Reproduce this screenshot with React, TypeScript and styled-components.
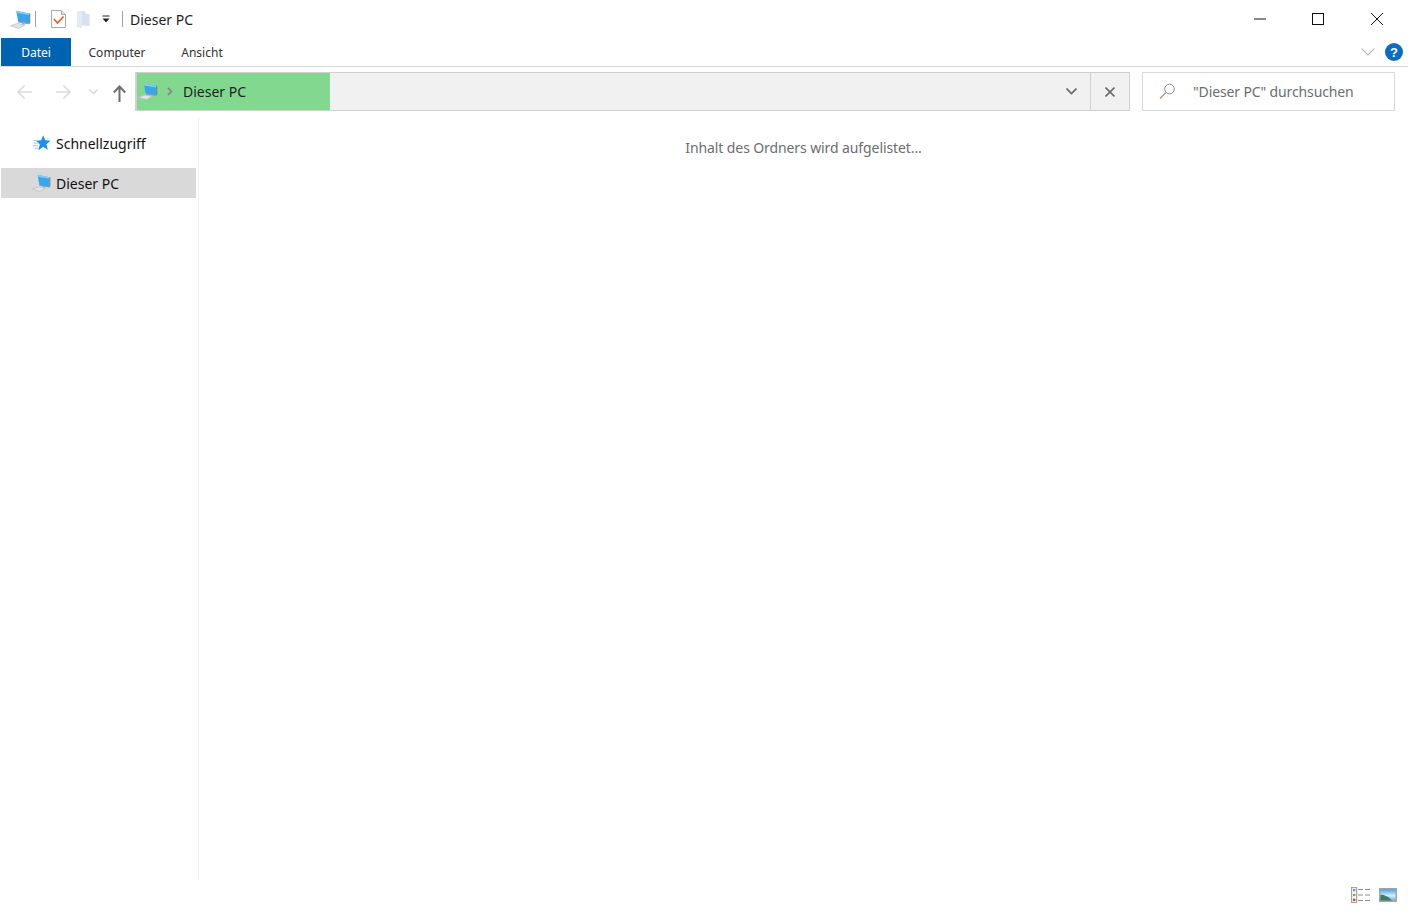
import React from 'react';
import styled, { createGlobalStyle } from 'styled-components';

const Global = createGlobalStyle`
  html, body { margin: 0; padding: 0; background: #fff; height: 100%; overflow: hidden; }
  #root { height: 100%; }
`;
const FONT = `"Noto Sans", "Open Sans", "Liberation Sans", sans-serif`;

const Window = styled.div`
  width: 1408px; height: 911px; display: flex; flex-direction: column; background: #fff;
  font-family: ${FONT}; color: #1a1a1a; overflow: hidden;
`;
const TitleBar = styled.div`height: 38px; display: flex; align-items: center; flex: none;`;
const QuickAccess = styled.div`display: flex; align-items: center; padding-left: 10px;`;
const Gap = styled.span<{ $w: number }>`width: ${p => p.$w}px; flex: none;`;
const Sep = styled.span<{ $l: number; $r: number }>`
  width: 1px; height: 16px; background: #a0a0a0; margin-left: ${p => p.$l}px; margin-right: ${p => p.$r}px;
`;
const TitleText = styled.span`font-size: 14px; color: #1c1c1c; line-height: 20px; padding-top: 1px;`;
const WindowButtons = styled.div`margin-left: auto; display: flex; align-items: center; padding-right: 2px;`;
const WinBtn = styled.div`width: 58.5px; height: 38px; display: flex; align-items: center; justify-content: center;`;
const Ribbon = styled.div`
  height: 28px; flex: none; display: flex; align-items: stretch; border-bottom: 1px solid #dadada; padding-left: 1px;
`;
const FileTab = styled.div`
  width: 70px; background: #0063b1; color: #fff; font-size: 12px; display: flex; align-items: center; justify-content: center;
`;
const Tab = styled.div<{ $w: number }>`
  width: ${p => p.$w}px; font-size: 12px; color: #333; display: flex; align-items: center; justify-content: center;
`;
const RibbonRight = styled.div`margin-left: auto; display: flex; align-items: center; gap: 10px; padding-right: 5px;`;
const Help = styled.div`
  width: 18px; height: 18px; border-radius: 50%; background: #0a6ac4; color: #fff; font-size: 13px; font-weight: 700;
  display: flex; align-items: center; justify-content: center; font-family: "Liberation Sans", sans-serif;
`;
const AddressRow = styled.div`height: 51px; flex: none; display: flex; align-items: flex-start; padding-top: 5px; box-sizing: border-box;`;
const NavButtons = styled.div`width: 135px; height: 39px; flex: none; display: flex; align-items: center; padding: 1px 0 0 17px; box-sizing: border-box;`;
const NavIcon = styled.span<{ $w: number }>`width: ${p => p.$w}px; display: flex; flex: none;`;
const AddressBox = styled.div`
  width: 995px; height: 39px; flex: none; display: flex; box-sizing: border-box; background: #f1f1f1; border-style: solid; border-width: 1px 1px 1px 2px;
  border-color: #d0d0d0;
`;
const Crumb = styled.div`
  width: 193px; background: #83d890; display: flex; align-items: center; font-size: 14px; color: #1e1e1e; padding-left: 1px; box-sizing: border-box; flex: none;
`;
const CrumbText = styled.span`margin-left: 10px;`;
const AddressEnd = styled.div`margin-left: auto; display: flex; height: 100%;`;
const AddrBtn = styled.div<{ $w: number; $border?: boolean }>`
  width: ${p => p.$w}px; box-sizing: border-box; display: flex; align-items: center; justify-content: center; ${p => p.$border ? 'border-left: 1px solid #d0d0d0;' : ''}
`;
const SearchBox = styled.div`
  width: 253px; height: 39px; margin-left: 12px; flex: none; box-sizing: border-box; border: 1px solid #d9d9d9; display: flex; align-items: center;
  padding-left: 16px; font-size: 14px; color: #6a6e72; letter-spacing: -0.13px;
`;
const SearchText = styled.span`margin-left: 17px;`;
const Main = styled.div`flex: 1; display: flex; min-height: 0;`;
const Sidebar = styled.div`
  width: 199px; flex: none; box-sizing: border-box; border-right: 1px solid #f0f0f0; padding: 10px 2px 0 1px; display: flex; flex-direction: column;
`;
const NavItem = styled.div<{ $selected?: boolean }>`
  height: 30px; margin-bottom: 10px; width: 195px; display: flex; align-items: center; padding-left: 31px; box-sizing: border-box; font-size: 14px; color: #111;
  background: ${p => p.$selected ? '#d9d9d9' : 'transparent'};
`;
const NavLabel = styled.span<{ $l: number }>`margin-left: ${p => p.$l}px;`;
const Content = styled.div`
  flex: 1; display: flex; justify-content: center; padding-top: 20px; font-size: 14px; color: #6a6e72; line-height: 20px; letter-spacing: -0.1px;
`;
const StatusBar = styled.div`height: 31px; flex: none; box-sizing: border-box; display: flex; align-items: center; justify-content: flex-end; gap: 9px; padding: 0 11px 2px 0;`;

const PcIcon = ({ w, h }: { w: number; h: number }) => (
  <svg width={w} height={h} viewBox="0 0 22 19" preserveAspectRatio="none">
    <path d="M.8 15.8 L8 13.4 L15.5 15.2 L9 18.5 Z" fill="#e2e5e7" stroke="#bcc1c5" strokeWidth=".8" />
    <path d="M12 12.5 L15 13 L15.5 15 L12.5 14.5 Z" fill="#b4bcc1" />
    <path d="M6.5 .8 L20 3.4 V13.6 L8.5 11.8 Z" fill="#38a5ee" />
    <path d="M6.5 .8 L20 3.4 V5 L7 2.8 Z" fill="#86d0f8" />
    <path d="M20 3.4 L21.2 3.2 V13.4 L20 13.7 Z" fill="#68808e" />
    <path d="M8.5 11.8 L20 13.6 V14.2 L8.7 12.5 Z" fill="#7d8e99" />
  </svg>
);
const Star = () => (
  <svg width="19" height="18" viewBox="0 0 20 18">
    <path d="M11.8 .8 L14 6.2 L19.5 6.6 L15.2 10.2 L16.6 16.4 L11.8 13 L6.8 16.6 L8.2 10.4 L4.4 7 L9.6 6.2 Z" fill="#1b8fe9" />
    <path d="M1.5 6.2 H6.5 M2 9 H7 M1 11.8 H6 M3 14.5 H7" stroke="#8cc8f2" strokeWidth="1" />
  </svg>
);
const Check = () => (
  <svg width="15" height="18" viewBox="0 0 15 18">
    <path d="M.5 .5 H10.5 L14.5 4.5 V17.5 H.5 Z" fill="#fff" stroke="#a8a8a8" />
    <path d="M10.5 .5 V4.5 H14.5" fill="#e8e8e8" stroke="#a8a8a8" />
    <path d="M3 9 L6.5 13 L12.5 6.5" fill="none" stroke="#e8602a" strokeWidth="1.8" />
  </svg>
);
const Folder = () => (
  <svg width="13" height="17" viewBox="0 0 13 17">
    <path d="M0 0 H8 L9 3 H12.5 V15 L5 14.5 V17 L0 15.5 Z" fill="#d6e2f2" />
    <path d="M0 0 H4 L5 1 V17 L0 15.5 Z" fill="#e3ebf6" />
  </svg>
);
const Dropper = () => (
  <svg width="8" height="8" viewBox="0 0 8 8">
    <path d="M.5 1 H7.5" stroke="#222" />
    <path d="M.5 3.5 H7.5 L4 7.5 Z" fill="#222" />
  </svg>
);
const Arrow = ({ dir, color }: { dir: 'l' | 'r'; color: string }) => (
  <svg width="16" height="16" viewBox="0 0 16 16" style={{ transform: dir === 'r' ? 'rotate(180deg)' : undefined }}>
    <path d="M1 8 H15 M7.5 1.5 L1 8 L7.5 14.5" fill="none" stroke={color} strokeWidth="1.6" />
  </svg>
);
const UpArrow = () => (
  <svg width="13" height="17" viewBox="0 0 13 17" style={{ marginTop: 3 }}>
    <path d="M6.5 17 V1.5 M.8 7.5 L6.5 1.5 L12.2 7.5" fill="none" stroke="#6e6e6e" strokeWidth="2" />
  </svg>
);
const Chevron = ({ w, color, sw = 1.5 }: { w: number; color: string; sw?: number }) => (
  <svg width={w} height={w * 0.6} viewBox="0 0 10 6">
    <path d="M.5 .5 L5 5 L9.5 .5" fill="none" stroke={color} strokeWidth={sw} />
  </svg>
);
const DetailsIcon = () => (
  <svg width="19" height="16" viewBox="0 0 19 16">
    <rect x=".6" y=".6" width="5" height="14.8" fill="#fff" stroke="#a4a4a4" strokeWidth="1.2" />
    <rect x="2" y="2" width="2.4" height="2.4" fill="#6fa0b0" />
    <rect x="2" y="6.8" width="2.4" height="2.4" fill="#8aa040" />
    <rect x="2" y="11.6" width="2.4" height="2.4" fill="#b85030" />
    <path d="M7 2.5 H12 M14 2.5 H19 M7 8 H12 M14 8 H19 M7 13.5 H12 M14 13.5 H19" stroke="#8c8c8c" />
  </svg>
);
const PreviewIcon = () => (
  <svg width="18" height="14" viewBox="0 0 18 14">
    <defs>
      <linearGradient id="sky" x1="0" y1="0" x2="0" y2="1">
        <stop offset="0" stopColor="#3f97e4" /><stop offset=".55" stopColor="#d8ecf8" /><stop offset="1" stopColor="#6fa5c4" />
      </linearGradient>
    </defs>
    <rect x=".7" y=".7" width="16.6" height="12.6" fill="url(#sky)" stroke="#a4a4a4" strokeWidth="1.4" />
    <path d="M1.4 7 C4 6 7 8 10 9.5 L13 12.6 H1.4 Z" fill="#3f7a68" />
  </svg>
);

export default function App() {
  return (
    <Window>
      <Global />
      <TitleBar>
        <QuickAccess>
          <PcIcon w={21} h={19} />
          <Sep $l={4} $r={15} />
          <Check />
          <Gap $w={11} />
          <Folder />
          <Gap $w={12} />
          <Dropper />
          <Sep $l={12} $r={7} />
          <TitleText>Dieser PC</TitleText>
        </QuickAccess>
        <WindowButtons>
          <WinBtn>
            <svg width="12" height="2" viewBox="0 0 12 2"><path d="M0 1 H12" stroke="#111" /></svg>
          </WinBtn>
          <WinBtn>
            <svg width="12" height="12" viewBox="0 0 12 12"><rect x=".5" y=".5" width="11" height="11" fill="none" stroke="#111" /></svg>
          </WinBtn>
          <WinBtn>
            <svg width="12" height="12" viewBox="0 0 12 12"><path d="M0 0 L12 12 M12 0 L0 12" stroke="#111" /></svg>
          </WinBtn>
        </WindowButtons>
      </TitleBar>
      <Ribbon>
        <FileTab>Datei</FileTab>
        <Tab $w={92}>Computer</Tab>
        <Tab $w={78}>Ansicht</Tab>
        <RibbonRight>
          <Chevron w={14} color="#b5b5b5" sw={0.8} />
          <Help>?</Help>
        </RibbonRight>
      </Ribbon>
      <AddressRow>
        <NavButtons>
          <NavIcon $w={38}><Arrow dir="l" color="#dcdcdc" /></NavIcon>
          <NavIcon $w={34}><Arrow dir="r" color="#dcdcdc" /></NavIcon>
          <NavIcon $w={24}><Chevron w={9} color="#d8d8d8" /></NavIcon>
          <NavIcon $w={13}><UpArrow /></NavIcon>
        </NavButtons>
        <AddressBox>
          <Crumb>
            <PcIcon w={20} h={17} />
            <Gap $w={9} />
            <svg width="6" height="9" viewBox="0 0 6 9"><path d="M1 1 L4.5 4.5 L1 8" fill="none" stroke="#8a8a8a" strokeWidth="1.8" /></svg>
            <CrumbText>Dieser PC</CrumbText>
          </Crumb>
          <AddressEnd>
            <AddrBtn $w={38}><Chevron w={11} color="#6a6a6a" sw={1.5} /></AddrBtn>
            <AddrBtn $w={39} $border>
              <svg width="10" height="10" viewBox="0 0 10 10"><path d="M.5 .5 L9.5 9.5 M9.5 .5 L.5 9.5" stroke="#6a6a6a" strokeWidth="1.6" /></svg>
            </AddrBtn>
          </AddressEnd>
        </AddressBox>
        <SearchBox>
          <svg width="17" height="17" viewBox="0 0 17 17">
            <circle cx="10.5" cy="6" r="4.8" fill="none" stroke="#8a8a8a" />
            <path d="M7 9.5 L1 15.5" stroke="#a98e78" strokeWidth="1.1" />
          </svg>
          <SearchText>"Dieser PC" durchsuchen</SearchText>
        </SearchBox>
      </AddressRow>
      <Main>
        <Sidebar>
          <NavItem><Star /><NavLabel $l={5}>Schnellzugriff</NavLabel></NavItem>
          <NavItem $selected><PcIcon w={19} h={18} /><NavLabel $l={5}>Dieser PC</NavLabel></NavItem>
        </Sidebar>
        <Content>Inhalt des Ordners wird aufgelistet...</Content>
      </Main>
      <StatusBar>
        <DetailsIcon />
        <PreviewIcon />
      </StatusBar>
    </Window>
  );
}
